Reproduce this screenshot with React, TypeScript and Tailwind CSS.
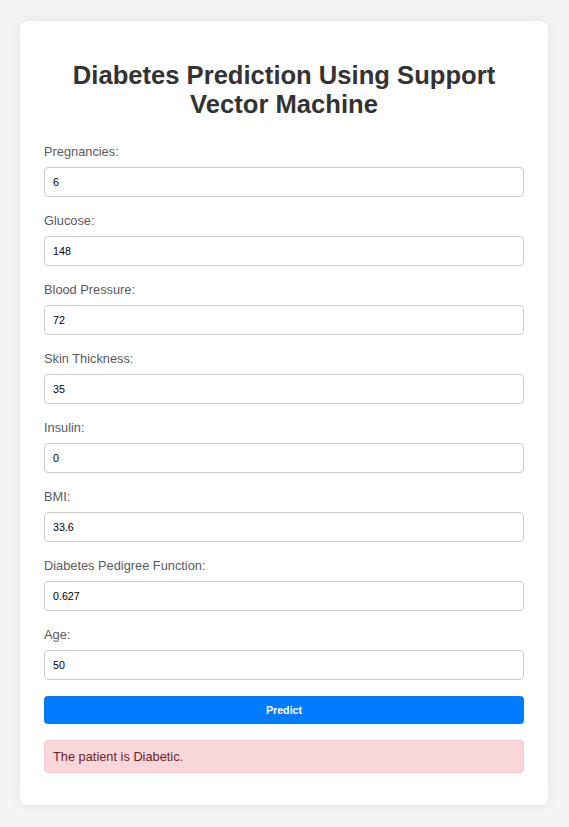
import { useState } from "react";

const fields = [
  { label: "Pregnancies:", value: "6" },
  { label: "Glucose:", value: "148" },
  { label: "Blood Pressure:", value: "72" },
  { label: "Skin Thickness:", value: "35" },
  { label: "Insulin:", value: "0" },
  { label: "BMI:", value: "33.6" },
  { label: "Diabetes Pedigree Function:", value: "0.627" },
  { label: "Age:", value: "50" },
];

export default function App() {
  const [values, setValues] = useState(fields.map((f) => f.value));

  return (
    <div className="min-h-screen bg-[#f4f4f4] pl-[20px] pr-[21px] pt-[21px] pb-[23px] font-['Liberation_Sans',Arial,sans-serif]">
      <div className="rounded-[8px] bg-white px-[24px] pt-[40px] pb-[32px] shadow-[0_0_12px_rgba(0,0,0,0.08)]">
        <h2 className="mb-[25px] text-center text-[25.6px] leading-[29px] font-bold text-[#333]">
          Diabetes Prediction Using Support
          <br />
          Vector Machine
        </h2>

        <form className="flex flex-col" onSubmit={(e) => e.preventDefault()}>
          <div className="flex flex-col gap-[16px]">
            {fields.map((f, i) => (
              <div key={f.label} className="flex flex-col">
                <label className="mb-[8px] text-[12.8px] leading-[15px] text-[#5a5a5a]">{f.label}</label>
                <input
                  type="text"
                  value={values[i]}
                  onChange={(e) => {
                    const next = [...values];
                    next[i] = e.target.value;
                    setValues(next);
                  }}
                  className="h-[30px] w-full rounded-[4px] border border-[#ccc] bg-white px-[8px] text-[10.7px] text-black outline-none"
                />
              </div>
            ))}
          </div>

          <button
            type="submit"
            className="mt-[16px] h-[28px] w-full rounded-[4px] bg-[#007bff] text-[10.7px] font-bold text-white"
          >
            Predict
          </button>
        </form>

        <div className="mt-[16px] flex h-[33px] items-center rounded-[4px] border border-[#f5c6cb] bg-[#f8d7da] px-[8px] text-[12.8px] text-[#721c24]">
          The patient is Diabetic.
        </div>
      </div>
    </div>
  );
}
